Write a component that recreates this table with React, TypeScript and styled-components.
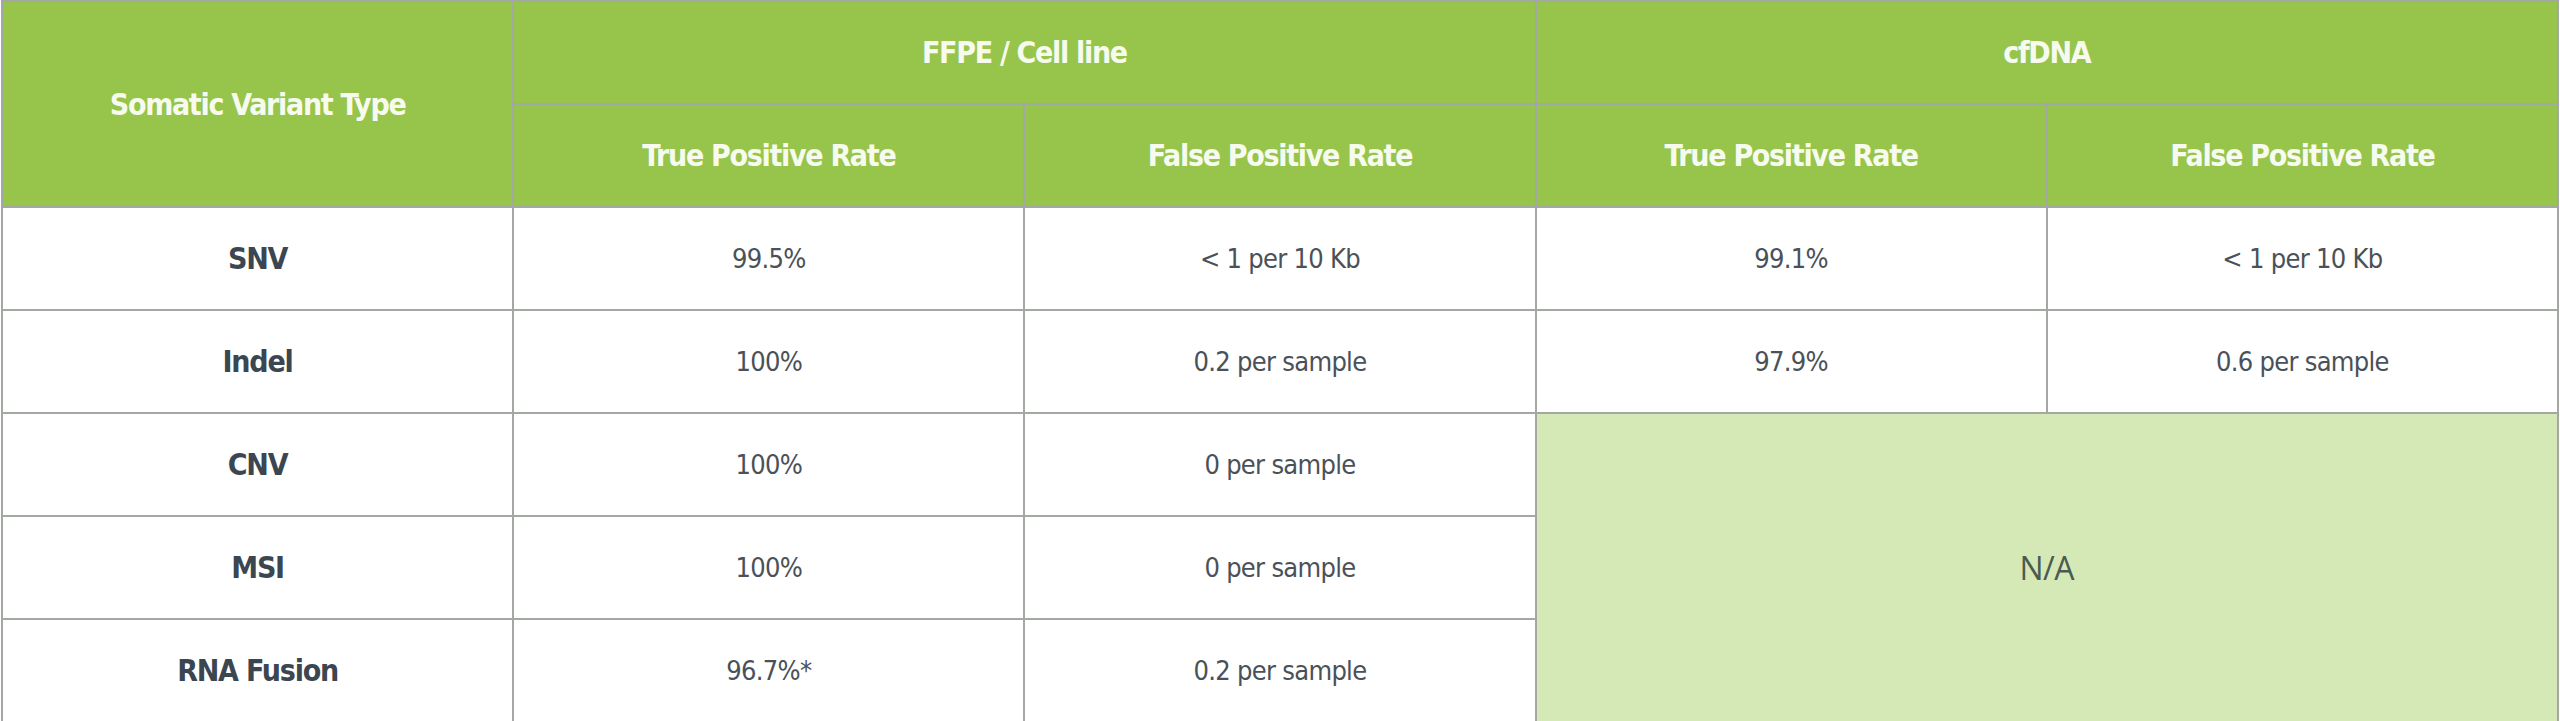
import React from "react";
import styled, { createGlobalStyle } from "styled-components";

const Global = createGlobalStyle`
  html, body { margin: 0; padding: 0; background: #ffffff; }
  body { font-family: "DejaVu Sans Condensed", "Liberation Sans", sans-serif; }
`;

const Wrap = styled.div`
  padding: 0 1px;
  width: 2558px;
`;

const Table = styled.table`
  width: 2558px;
  border-collapse: collapse;
  table-layout: fixed;
`;

const Row = styled.tr`
  height: 103px;
`;

const Head = styled.th`
  background: #97c54b;
  color: #f7fbef;
  border: 2px solid #a4a8a2;
  font-family: "DejaVu Sans Condensed", "Liberation Sans", sans-serif;
  font-weight: 700;
  font-size: 30px;
  letter-spacing: -1.3px;
  text-align: center;
  vertical-align: middle;
  padding: 0;
`;

const Label = styled.td`
  border: 2px solid #a4a8a2;
  color: #3b4650;
  font-weight: 700;
  font-size: 30px;
  letter-spacing: -1.2px;
  text-align: center;
  vertical-align: middle;
  padding: 0;
`;

const Value = styled.td`
  border: 2px solid #a4a8a2;
  color: #4a5158;
  font-weight: 400;
  font-size: 27px;
  letter-spacing: -0.7px;
  text-align: center;
  vertical-align: middle;
  padding: 0;
`;

const Empty = styled.td`
  border: 2px solid #a4a8a2;
  background: #d5e9b6;
  color: #4b5a52;
  font-family: "Open Sans", "Liberation Sans", sans-serif;
  font-weight: 400;
  font-size: 32px;
  letter-spacing: -0.5px;
  text-align: center;
  vertical-align: middle;
  padding: 0;
`;

type RowData = { label: string; values: string[] };

const rows: RowData[] = [
  { label: "SNV", values: ["99.5%", "< 1 per 10 Kb", "99.1%", "< 1 per 10 Kb"] },
  { label: "Indel", values: ["100%", "0.2 per sample", "97.9%", "0.6 per sample"] },
  { label: "CNV", values: ["100%", "0 per sample"] },
  { label: "MSI", values: ["100%", "0 per sample"] },
  { label: "RNA Fusion", values: ["96.7%*", "0.2 per sample"] },
];

export default function App() {
  return (
    <Wrap>
      <Global />
      <Table>
        <thead>
          <Row>
            <Head rowSpan={2}>Somatic Variant Type</Head>
            <Head colSpan={2}>FFPE / Cell line</Head>
            <Head colSpan={2}>cfDNA</Head>
          </Row>
          <Row>
            <Head>True Positive Rate</Head>
            <Head>False Positive Rate</Head>
            <Head>True Positive Rate</Head>
            <Head>False Positive Rate</Head>
          </Row>
        </thead>
        <tbody>
          {rows.map((r, i) => (
            <Row key={r.label}>
              <Label>{r.label}</Label>
              {r.values.map((v, j) => (
                <Value key={j}>{v}</Value>
              ))}
              {i === 2 && (
                <Empty rowSpan={3} colSpan={2}>
                  N/A
                </Empty>
              )}
            </Row>
          ))}
        </tbody>
      </Table>
    </Wrap>
  );
}
